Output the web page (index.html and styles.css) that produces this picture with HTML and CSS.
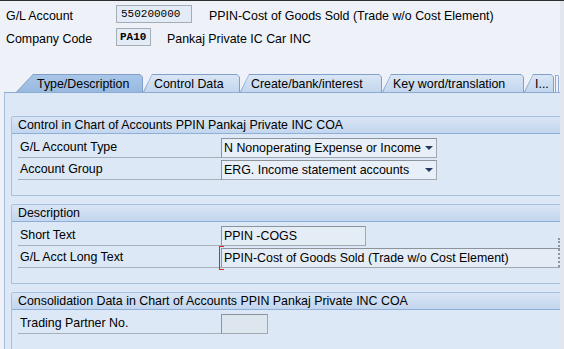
FILE: index.html
```html
<!DOCTYPE html>
<html lang="en">

<head>
    <meta charset="UTF-8">
    <meta name="viewport" content="width=device-width, initial-scale=1.0">
    <title>Display G/L Account Centrally</title>
    <link rel="stylesheet" href="styles.css">
</head>

<body>
    <div class="screen">
        <div class="content">
            <div class="header">
                <div class="hdr-row">
                    <span class="hdr-label">G/L Account</span>
                    <span class="key key-acct">550200000</span>
                    <span class="hdr-text">PPIN-Cost of Goods Sold (Trade w/o Cost Element)</span>
                </div>
                <div class="hdr-row">
                    <span class="hdr-label">Company Code</span>
                    <span class="key key-code">PA10</span>
                    <span class="hdr-text hdr-text-code">Pankaj Private IC Car INC</span>
                </div>
            </div>

            <div class="tabs">
                <div class="tab tab-active tab-1"><div class="tab-face">Type/Description</div></div>
                <div class="tab tab-2"><div class="tab-face">Control Data</div></div>
                <div class="tab tab-3"><div class="tab-face">Create/bank/interest</div></div>
                <div class="tab tab-4"><div class="tab-face">Key word/translation</div></div>
                <div class="tab tab-5"><div class="tab-face">I...</div></div>
                <div class="tab-stack"></div>
            </div>

            <div class="panel">
                <div class="group">
                    <div class="group-title">Control in Chart of Accounts PPIN Pankaj Private INC COA</div>
                    <div class="group-body">
                        <div class="row">
                            <div class="row-label">G/L Account Type</div>
                            <div class="field select select-wide">
                                <span>N Nonoperating Expense or Income</span>
                                <span class="arrow"></span>
                            </div>
                        </div>
                        <div class="row">
                            <div class="row-label">Account Group</div>
                            <div class="field select select-wide">
                                <span>ERG. Income statement accounts</span>
                                <span class="arrow"></span>
                            </div>
                        </div>
                    </div>
                </div>

                <div class="group">
                    <div class="group-title">Description</div>
                    <div class="group-body group-body-desc">
                        <div class="row">
                            <div class="row-label">Short Text</div>
                            <div class="field input input-short">PPIN -COGS</div>
                        </div>
                        <div class="row">
                            <div class="row-label">G/L Acct Long Text</div>
                            <div class="field input input-long">
                                <span class="focus-mark"></span>
                                PPIN-Cost of Goods Sold (Trade w/o Cost Element)
                            </div>
                        </div>
                        <span class="more-mark"></span>
                    </div>
                </div>

                <div class="group">
                    <div class="group-title">Consolidation Data in Chart of Accounts PPIN Pankaj Private INC COA</div>
                    <div class="group-body">
                        <div class="row">
                            <div class="row-label">Trading Partner No.</div>
                            <div class="field input input-partner"></div>
                        </div>
                    </div>
                </div>
            </div>
        </div>
        <div class="edge"></div>
    </div>
</body>

</html>
```

FILE: styles.css
```css
/* General Styles */
body {
    margin: 0;
    padding: 0;
    font-family: "Liberation Sans", Arial, sans-serif;
    font-size: 12.4px;
    color: #000;
    background-color: #eef2f8;
    overflow: hidden;
}

.screen {
    display: flex;
    height: 349px;
    border-top: 1px solid #2e2e2e;
    box-sizing: border-box;
}

.content {
    width: 560px;
    overflow: hidden;
    display: flex;
    flex-direction: column;
}

.edge {
    flex: 1;
    background: #e2e7ed;
}

/* Header */
.header {
    padding: 4px 0 0 6px;
    display: flex;
    flex-direction: column;
    gap: 5px;
}

.hdr-row {
    display: flex;
    align-items: center;
    height: 18px;
}

.hdr-label {
    width: 110px;
    padding-top: 3px;
}

.key {
    height: 18px;
    box-sizing: border-box;
    border: 1px solid #a4acb6;
    background: #e2ebf6;
    font-family: "Liberation Mono", "Courier New", monospace;
    font-size: 11px;
    line-height: 16px;
    padding: 0 4px;
}

.key-acct {
    width: 76px;
}

.key-code {
    width: 35px;
    padding: 0 3px;
    font-weight: bold;
}

.hdr-text {
    margin-left: 17px;
    padding-top: 3px;
}

.hdr-text-code {
    margin-left: 16px;
}

/* Tab strip */
.tabs {
    display: flex;
    align-items: flex-end;
    height: 18px;
    margin-top: 28px;
    padding-left: 16px;
}

.tab {
    height: 18px;
    background: #809fca;
    clip-path: polygon(9px 0, calc(100% - 3px) 0, 100% 3px, 100% 100%, 0 100%);
}

.tab-face {
    height: 17px;
    margin: 1px 1px 0 1px;
    box-sizing: border-box;
    padding: 2px 0 0 10px;
    line-height: 15px;
    white-space: nowrap;
    background: linear-gradient(#d9e6f5, #c2d6ee);
    clip-path: polygon(8px 0, calc(100% - 2px) 0, 100% 2px, 100% 100%, 0 100%);
}

.tab-active {
    clip-path: polygon(17px 0, calc(100% - 3px) 0, 100% 3px, 100% 100%, 0 100%);
}

.tab-active .tab-face {
    padding-left: 20px;
    background: linear-gradient(#a9c6e8, #98b9e0);
    clip-path: polygon(16px 0, calc(100% - 2px) 0, 100% 2px, 100% 100%, 0 100%);
}

.tab-1 { width: 127px; }
.tab-2 { width: 97px; }
.tab-3 { width: 142px; }
.tab-4 { width: 142px; }
.tab-5 { width: 30px; }

.tab-stack {
    width: 2px;
    height: 16px;
    margin-left: 1px;
    border: 1px solid #8ea9cf;
    border-bottom: none;
    border-radius: 0 2px 0 0;
}

/* Tab panel */
.panel {
    flex: 1;
    margin-left: 4px;
    padding: 23px 0 0 6px;
    background: #dce8f6;
    border-top: 1px solid #8caad2;
    border-left: 1px solid #a6bdd9;
}

/* Group boxes */
.group {
    border: 1px solid #a8c0dd;
    border-right: none;
    border-radius: 3px 0 0 0;
    margin-bottom: 8px;
}

.group-title {
    height: 16px;
    line-height: 16px;
    padding-left: 6px;
    white-space: nowrap;
    background: linear-gradient(#d8e5f5, #c3d6ee);
    border-bottom: 1px solid #8eafd7;
    border-radius: 2px 0 0 0;
}

.group-body {
    padding: 4px 0 15px 6px;
    display: flex;
    flex-direction: column;
    gap: 2px;
}

.group-body-desc {
    position: relative;
}

.more-mark {
    position: absolute;
    right: 0;
    top: 16px;
    height: 29px;
    border-right: 2px dotted #8d949c;
    z-index: 2;
}

.row {
    display: flex;
    height: 20px;
}

.row-label {
    width: 203px;
    height: 20px;
    box-sizing: border-box;
    padding-left: 2px;
    line-height: 19px;
    border-bottom: 1px solid #a9afb6;
}

/* Fields */
.field {
    position: relative;
    height: 20px;
    box-sizing: border-box;
    border: 1px solid #a1a8b0;
    border-top-color: #8c939b;
    border-left-color: #8c939b;
    padding-left: 2px;
    line-height: 18px;
    white-space: nowrap;
}

.select {
    display: flex;
    align-items: center;
    background: #e8eff8;
}

.select-wide {
    width: 216px;
}

.arrow {
    margin-left: auto;
    margin-right: 3px;
    width: 0;
    height: 0;
    border-left: 4px solid transparent;
    border-right: 4px solid transparent;
    border-top: 4px solid #253a5c;
}

.input {
    background: #e4ecf6;
}

.input-short {
    width: 145px;
}

.input-long {
    flex: 1;
    margin-right: -10px;
}

.input-partner {
    width: 47px;
    background: #dde5ee;
}

.focus-mark {
    position: absolute;
    left: -3px;
    top: -3px;
    width: 4px;
    height: 22px;
    border: 1px solid #e0231f;
    border-right: none;
    z-index: 1;
}
```
